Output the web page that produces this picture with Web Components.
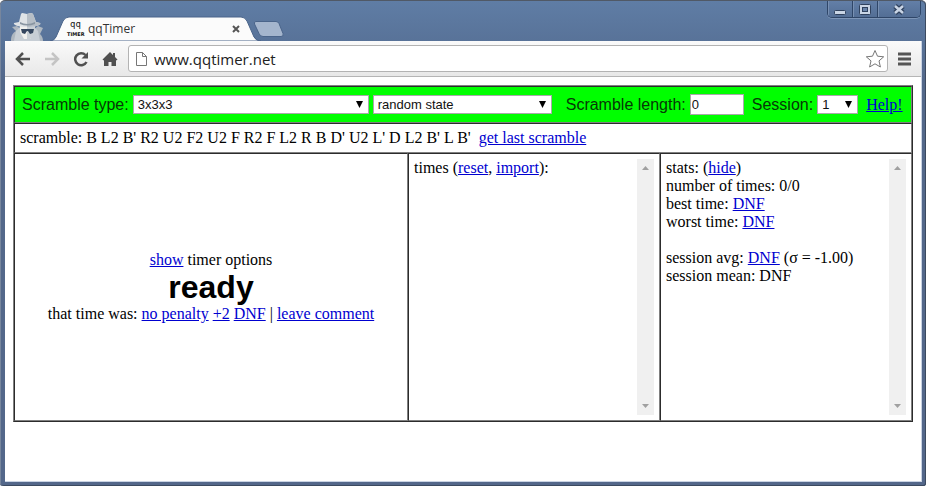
<!DOCTYPE html>
<html lang="en">
<head>
<meta charset="utf-8">
<title>qqTimer</title>
<style>
  body { margin: 0; background: #fff; font: 16px/18px "Liberation Serif", serif; color: #000; }
  a { color: #0000d0; }
  p { margin: 0; }
  .gap { margin-left: 10px; }
  .near { margin-left: 4px; }
  h1 { margin: 0; font: bold 32px/36px "Liberation Sans", sans-serif; }
</style>
</head>
<body>
<browser-window>
  <window-buttons slot="controls"></window-buttons>
  <browser-tab slot="tab">qqTimer</browser-tab>
  <browser-toolbar slot="toolbar" address="www.qqtimer.net"></browser-toolbar>
  <timer-board>
    <scramble-bar slot="bar">
      <choice-field label="Scramble type:" value="3x3x3" size="236"></choice-field>
      <choice-field name="Scramble variant" value="random state" size="179"></choice-field>
      <number-field class="gap" label="Scramble length:" value="0"></number-field>
      <choice-field class="near" label="Session:" value="1" size="41"></choice-field>
      <a class="near" href="#help">Help!</a>
    </scramble-bar>
    <p slot="scramble">scramble: B L2 B' R2 U2 F2 U2 F R2 F L2 R B D' U2 L' D L2 B' L B'&nbsp; <a href="#last">get last scramble</a></p>
    <div slot="timer">
      <p><a href="#show">show</a> timer options</p>
      <h1>ready</h1>
      <p>that time was: <a href="#ok">no penalty</a> <a href="#plus">+2</a> <a href="#dnf">DNF</a> | <a href="#comment">leave comment</a></p>
    </div>
    <scroll-pane slot="times"><p>times (<a href="#reset">reset</a>, <a href="#import">import</a>):</p></scroll-pane>
    <scroll-pane slot="stats">
      <p>stats: (<a href="#hide">hide</a>)</p>
      <p>number of times: 0/0</p>
      <p>best time: <a href="#best">DNF</a></p>
      <p>worst time: <a href="#worst">DNF</a></p>
      <p><br></p>
      <p>session avg: <a href="#avg">DNF</a> (σ = -1.00)</p>
      <p>session mean: DNF</p>
    </scroll-pane>
  </timer-board>
</browser-window>

<script>
const define = (name, render) => customElements.define(name, class extends HTMLElement {
  constructor() {
    super();
    this.attachShadow({ mode: 'open' });
  }
  connectedCallback() {
    this.shadowRoot.innerHTML = render(this);
  }
});

define('browser-window', () => `
<style>
  :host { display: flex; flex-direction: column; box-sizing: border-box; min-height: 100vh; padding: 0 4px 4px 5px;
    background: linear-gradient(#5f7da5, #587298 42px, #53688a 80px, #53678a); border-top: 1px solid #505966;
    box-shadow: inset 1px 0 #77869d, inset -1px 0 #3c4a60, inset 0 -1px #3c4a60; border-radius: 5px 5px 3px 3px; }
  header { display: flex; align-items: flex-end; height: 40px; position: relative; }
  .spy { width: 36px; height: 28px; margin-left: 4px; }
  .new { width: 34px; height: 20px; padding: 0; border: 0; background: none; margin-left: -12px; }
  .new svg { display: block; }
  .controls { position: absolute; right: 1px; top: 0; }
  .sheet { flex: 1; background: #fff; border-right: 1px solid #c9d3e3; border-bottom: 1px solid #c9d3e3; }
  main { padding: 8px; }
</style>
<header>
  <svg class="spy" viewBox="0 0 36 28" aria-hidden="true">
    <path d="M2 28c0-6 2-8 5-10l-4-4 5-1 5 4h11l5-4 5 2-3 6c2 2 3 4 3 7z" fill="#aeb7c0"/>
    <path d="M7 18l4-4 7 9 7-9 4 4 2 10H5z" fill="#c7ced5"/>
    <path d="M11 11h14v8l-4 7h-6l-4-7z" fill="#f1f1ee"/>
    <path d="M18 12h8v8l-5 6h-3z" fill="#c9d0d5"/>
    <path d="M10 9l2-8c1-2 4 0 6 0s4-2 6 0l3 8 4 1c2 2-5 4-13 4S4 12 5 10z" fill="#dfe3e6"/>
    <path d="M18 1c2 0 4-2 6 0l3 8 4 1c2 2-5 4-13 4z" fill="#b6bec6"/>
    <path d="M11 9q7 4 15 0v2q-8 3-15 0z" fill="#8995a1"/>
    <path d="M12 16h13l-1 4-3 1-2-3h-1l-2 3-3-1z" fill="#35475f"/>
  </svg>
  <slot name="tab"></slot>
  <button class="new" aria-label="New tab"><svg width="34" height="20" viewBox="0 0 34 20"><path d="M4 .5h20q2 0 3 2l4 10q1 3-2 3H11q-3 0-4-3L2.500 3q-1-2.500 1.500-2.500z" fill="#a4b5cd" stroke="#4a648a"/></svg></button>
  <div class="controls"><slot name="controls"></slot></div>
</header>
<div class="sheet"><slot name="toolbar"></slot><main><slot></slot></main></div>`);

define('window-buttons', () => `
<style>
  :host { display: flex; border: 1px solid #2f4668; border-top: 0; border-radius: 0 0 5px 5px; box-shadow: 0 1px #7d95b7; overflow: hidden; }
  button { width: 25px; height: 16px; padding: 0; border: 0; border-right: 1px solid #2f4668; background: linear-gradient(#637fa7, #536e95); box-shadow: inset 1px 0 #7890b2; }
  button:last-child { width: 42px; border-right: 0; }
  svg { display: block; margin: 0 auto; }
</style>
<button aria-label="Minimize"><svg width="14" height="14"><rect x="1.500" y="8.500" width="11" height="4" rx="1" fill="#c9d5e5" stroke="#30425e"/></svg></button>
<button aria-label="Maximize"><svg width="14" height="14"><rect x="1.500" y="2.500" width="11" height="10" rx="1" fill="#c9d5e5" stroke="#30425e"/><rect x="4.500" y="5.500" width="5" height="4" fill="#6984aa" stroke="#30425e"/></svg></button>
<button aria-label="Close"><svg width="14" height="14"><path d="M3 4l8 7M11 4l-8 7" stroke="#30425e" stroke-width="5"/><path d="M3 4l8 7M11 4l-8 7" stroke="#c9d5e5" stroke-width="2.500"/></svg></button>`);

define('browser-tab', () => `
<style>
  :host { display: grid; width: 214px; height: 25px; margin-left: 5px; }
  .shape, .row { grid-area: 1 / 1; }
  .row { display: flex; align-items: center; padding: 0 23px 0 16px; font: 12px/16px "Open Sans", sans-serif; color: #333; }
  .name { flex: 1; margin-left: 1px; }
  button { width: 10px; height: 10px; padding: 0; border: 0; background: none; }
  button svg { display: block; }
  .mark { overflow: visible; }
</style>
<svg class="shape" width="214" height="25" aria-hidden="true"><path d="M0 25q4 0 6-4l7-16q2-4 6-4h172q4 0 6 4l7 16q2 4 7 4z" fill="#fbfbfb" stroke="#4a648a"/></svg>
<div class="row">
  <svg class="mark" width="21" height="20" aria-hidden="true"><text x="4" y="8" font-family="DejaVu Sans Mono" font-size="9" fill="#111">qq</text><text x="1" y="17" font-family="DejaVu Sans" font-size="5" font-weight="bold" fill="#111">TIMER</text></svg>
  <span class="name"><slot></slot></span>
  <button aria-label="Close tab"><svg width="10" height="10"><path d="M2 2l6 6M8 2l-6 6" stroke="#555" stroke-width="2"/></svg></button>
</div>`);

define('browser-toolbar', el => `
<style>
  :host { display: flex; align-items: center; box-sizing: border-box; height: 36px; padding: 0 2px 0 3px; background: linear-gradient(#fafafa, #e8e8e8); border-bottom: 1px solid #b5b5b5; border-radius: 3px 3px 0 0; }
  button { width: 29px; height: 28px; padding: 0; border: 0; background: none; }
  button svg { display: block; margin: 0 auto; }
  label { display: flex; flex: 1; align-items: center; box-sizing: border-box; height: 27px; margin: 0 2px 0 4px; padding: 0 2px 0 6px; background: #fff; border: 1px solid #b3b3b3; border-radius: 3px; }
  input { flex: 1; min-width: 0; margin-left: 6px; padding: 0; border: 0; outline: 0; background: none; color: #222; font: 15px/20px "Open Sans", sans-serif; }
  label button { width: 20px; }
</style>
<button aria-label="Back"><svg width="16" height="16"><path d="M15 8H3M8 2L2 8l6 6" fill="none" stroke="#505050" stroke-width="2.500"/></svg></button>
<button aria-label="Forward"><svg width="16" height="16"><path d="M1 8h12M8 2l6 6-6 6" fill="none" stroke="#c4c4c4" stroke-width="2.500"/></svg></button>
<button aria-label="Reload"><svg width="16" height="16"><path d="M13.500 11a6 6 0 1 1-1-7" fill="none" stroke="#505050" stroke-width="2.500"/><path d="M15 1v6.500H8.500z" fill="#505050"/></svg></button>
<button aria-label="Home"><svg width="16" height="16"><path d="M8 1l3 3V2h2v4l2.500 2.500-1 1L14 9v6H9.500v-4h-3v4H2V9l-.5.5-1-1z" fill="#505050"/></svg></button>
<label>
  <svg width="13" height="16" aria-hidden="true"><path d="M1.500 1.500h6l4 4v9h-10zM7.500 1.500v4h4" fill="#fff" stroke="#777"/></svg>
  <input type="text" aria-label="Address" value="${el.getAttribute('address')}">
  <button aria-label="Bookmark"><svg width="20" height="20"><path d="M10 1.500l2.500 5.700 6.200.6-4.700 4.100 1.400 6.100-5.400-3.200L4.600 18 6 11.900 1.300 7.800l6.200-.6z" fill="#fff" stroke="#777" stroke-linejoin="round"/></svg></button>
</label>
<button aria-label="Menu"><svg width="13" height="14"><path d="M0 2h13M0 7h13M0 12h13" stroke="#555" stroke-width="3"/></svg></button>`);

define('timer-board', () => `
<style>
  :host { display: grid; grid-template-columns: 394fr 252fr 252fr; border: 1px solid; border-color: #808080 #2c2c2c #2c2c2c #808080; }
  section { box-sizing: border-box; min-width: 0; padding: 5px; border: 1px solid; border-color: #2c2c2c #808080 #808080 #2c2c2c; }
  .wide { grid-column: 1 / -1; }
  .bar { background: #0f0; padding: 7px; }
  .timer { display: grid; place-content: center; text-align: center; }
</style>
<section class="wide bar"><slot name="bar"></slot></section>
<section class="wide"><slot name="scramble"></slot></section>
<section class="timer"><slot name="timer"></slot></section>
<section><slot name="times"></slot></section>
<section><slot name="stats"></slot></section>`);

define('scramble-bar', () => `
<style>
  :host { display: flex; align-items: center; gap: 4px; }
</style>
<slot></slot>`);

define('choice-field', el => `
<style>
  :host { display: block; font: 16px/19px "Liberation Sans", sans-serif; color: #063806; }
  label { display: flex; align-items: center; gap: 4px; white-space: nowrap; }
  .box { position: relative; display: block; width: ${el.getAttribute('size')}px; }
  select { display: block; appearance: none; width: 100%; height: 19px; box-sizing: border-box; margin: 0; padding: 0 4px; border: 1px solid #a9a9a9; border-radius: 0; background: #fff; color: #111; font: 13px/17px "Liberation Sans", sans-serif; }
  svg { position: absolute; right: 6px; top: 6px; pointer-events: none; }
</style>
<label>${el.hasAttribute('label') ? `<span>${el.getAttribute('label')}</span>` : ''}
  <span class="box"><select ${el.hasAttribute('name') ? `aria-label="${el.getAttribute('name')}"` : ''}><option>${el.getAttribute('value')}</option></select>
  <svg width="7" height="7" aria-hidden="true"><path d="M0 0h7L3.500 7z" fill="#000"/></svg></span>
</label>`);

define('number-field', el => `
<style>
  :host { display: block; font: 16px/19px "Liberation Sans", sans-serif; color: #063806; }
  label { display: flex; align-items: center; gap: 4px; white-space: nowrap; }
  input { box-sizing: border-box; width: 54px; height: 21px; margin: 0; padding: 0 1px; border: 1px solid #a9a9a9; background: #fff; color: #111; font: 13px/17px "Liberation Sans", sans-serif; }
</style>
<label><span>${el.getAttribute('label')}</span><input type="text" inputmode="numeric" value="${el.getAttribute('value')}"></label>`);

define('scroll-pane', () => `
<style>
  :host { display: flex; height: 256px; }
  .text { flex: 1; min-width: 0; }
  .track { display: flex; flex-direction: column; justify-content: space-between; align-items: center; box-sizing: border-box; width: 17px; padding: 7px 0; background: #f0f0f0; }
</style>
<div class="text"><slot></slot></div>
<div class="track" aria-hidden="true"><svg width="7" height="4"><path d="M0 4l3.500-4L7 4z" fill="#a0a0a0"/></svg><svg width="7" height="4"><path d="M0 0h7L3.500 4z" fill="#a0a0a0"/></svg></div>`);
</script>
</body>
</html>
